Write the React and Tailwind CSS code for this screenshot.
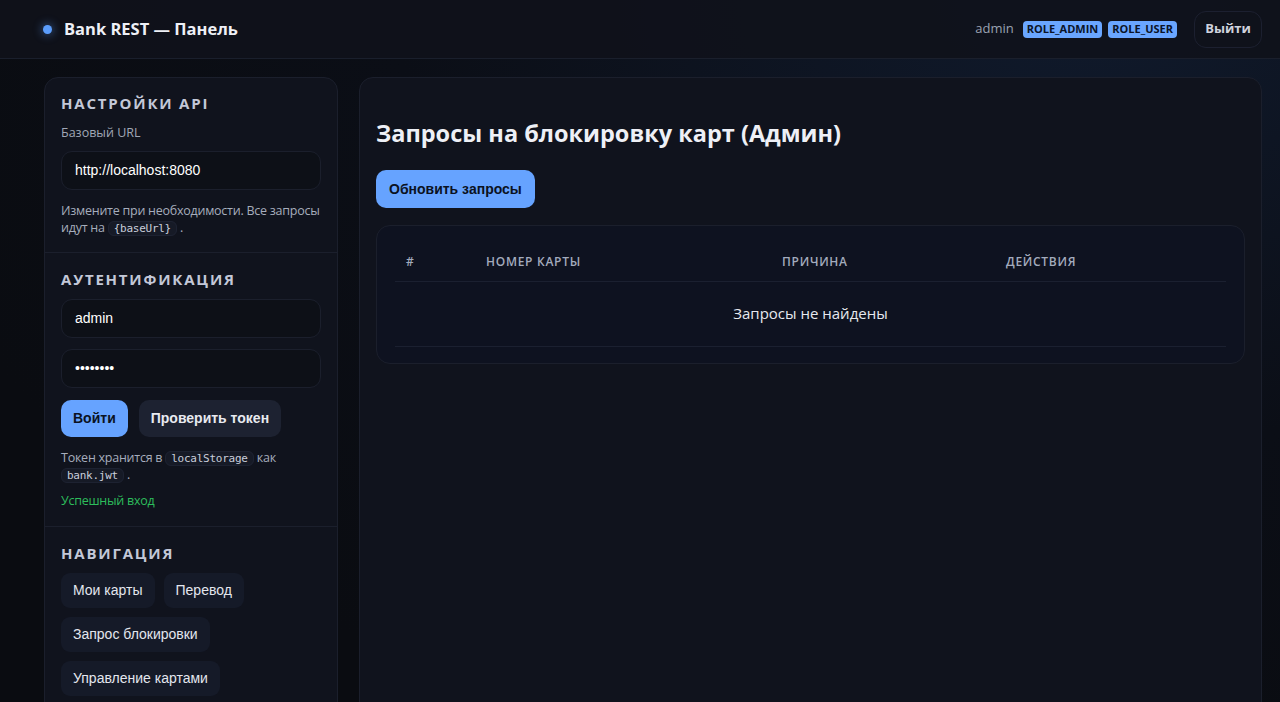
import React from 'react'

const sans = "font-['Open_Sans','Noto_Sans',sans-serif]"
const arial = "font-['Liberation_Sans',Arial,sans-serif]"
const mono = "font-['DejaVu_Sans_Mono','Liberation_Mono',monospace]"

function Code({ children }) {
  return (
    <code className={`${mono} text-[11px] leading-[14px] text-[#c9cedb] bg-[#161a26] border border-[#1d2231] rounded-md px-[5px] py-0`}>
      {children}
    </code>
  )
}

function Input({ value, type = 'text' }) {
  return (
    <input
      readOnly
      type={type}
      value={value}
      className={`${arial} w-full h-[39px] rounded-[11px] bg-[#0d1017] border border-[#1b1f2c] px-[13px] text-[14px] text-white outline-none`}
    />
  )
}

function SectionTitle({ children }) {
  return (
    <h2 className={`${sans} text-[15px] font-bold tracking-[0.12em] text-[#c3c8d8] leading-none`}>
      {children}
    </h2>
  )
}

export default function App() {
  const nav = [['Мои карты', 'Перевод'], ['Запрос блокировки'], ['Управление картами']]

  return (
    <div className="min-h-[702px] h-[702px] overflow-hidden bg-[#0a0c11] bg-[radial-gradient(ellipse_at_85%_0%,#101a2c_0%,#0b0e16_45%,#0a0c11_80%)]">
      {/* Header */}
      <header className="h-[59px] flex items-center justify-between pl-[43px] pr-[18px] bg-[#0f121b]/90 border-b border-[#1a1f2c]">
        <div className="flex items-center gap-[12px]">
          <span className="w-[9px] h-[9px] rounded-full bg-[#5b9dfc] shadow-[0_0_8px_2px_rgba(91,157,252,0.35)]" />
          <span className={`${sans} text-[16.5px] font-bold text-[#eef0f6]`}>Bank REST — Панель</span>
        </div>
        <div className="flex items-center">
          <span className={`${sans} text-[13px] text-[#9ba2b2] mr-[9px]`}>admin</span>
          <span className={`${sans} text-[11px] font-bold text-[#0b1428] bg-[#6aa6ff] rounded-[4px] px-[4px] h-[17px] flex items-center mr-[6px]`}>ROLE_ADMIN</span>
          <span className={`${sans} text-[11px] font-bold text-[#0b1428] bg-[#6aa6ff] rounded-[4px] px-[4px] h-[17px] flex items-center mr-[17px]`}>ROLE_USER</span>
          <button className={`${sans} h-[37px] w-[68px] rounded-[12px] border border-[#1c2030] bg-[#0f121b] text-[13px] font-bold text-[#cfd3de]`}>Выйти</button>
        </div>
      </header>

      <div className="flex gap-[21px] pl-[44px] pr-[18px] pt-[18px]">
        {/* Sidebar */}
        <aside className="w-[294px] shrink-0 h-[700px] rounded-[14px] bg-[#10131d] border border-[#1b1f2c]">
          <section className="px-[16px] pt-[18px] pb-[16px] border-b border-[#1b1f2c]">
            <SectionTitle>НАСТРОЙКИ API</SectionTitle>
            <div className={`${sans} text-[12.5px] text-[#a0a7b6] mt-[13px] mb-[8px]`}>Базовый URL</div>
            <Input value="http://localhost:8080" />
            <p className={`${sans} text-[12.5px] tracking-[-0.02em] leading-[17px] text-[#a6adbc] mt-[12px]`}>
              Измените при необходимости. Все запросы идут на <Code>{'{baseUrl}'}</Code> .
            </p>
          </section>

          <section className="px-[16px] pt-[19px] pb-[15px] border-b border-[#1b1f2c]">
            <SectionTitle>АУТЕНТИФИКАЦИЯ</SectionTitle>
            <div className="mt-[12px] flex flex-col gap-[11px]">
              <Input value="admin" />
              <Input value="password" type="password" />
            </div>
            <div className="flex gap-[11px] mt-[12px]">
              <button className={`${arial} h-[37px] px-[12px] rounded-[10px] bg-[#66a3ff] text-[14px] font-bold text-[#0b1222]`}>Войти</button>
              <button className={`${arial} h-[37px] px-[12px] rounded-[10px] bg-[#1d2231] text-[14px] font-bold text-[#e8eaf0]`}>Проверить токен</button>
            </div>
            <p className={`${sans} text-[12.5px] tracking-[-0.02em] leading-[17px] text-[#a6adbc] mt-[12px]`}>
              Токен хранится в <Code>localStorage</Code> как <Code>bank.jwt</Code> .
            </p>
            <p className={`${sans} text-[12.5px] tracking-[-0.02em] text-[#2dbd5c] mt-[9px]`}>Успешный вход</p>
          </section>

          <section className="px-[16px] pt-[19px]">
            <SectionTitle>НАВИГАЦИЯ</SectionTitle>
            <div className="mt-[12px] flex flex-col gap-[9px]">
              {nav.map((row, i) => (
                <div key={i} className="flex gap-[9px]">
                  {row.map((label) => (
                    <button key={label} className={`${arial} h-[35px] px-[12px] rounded-[9px] bg-[#151a28] text-[14px] text-[#e3e6ee]`}>
                      {label}
                    </button>
                  ))}
                </div>
              ))}
            </div>
          </section>
        </aside>

        {/* Main */}
        <main className="flex-1 h-[700px] rounded-[14px] bg-[#10131d] border border-[#1b1f2c] px-[16px] pt-[38px]">
          <h1 className={`${sans} text-[23.5px] font-bold text-[#eef0f6] leading-[34px]`}>Запросы на блокировку карт (Админ)</h1>
          <button className={`${arial} mt-[20px] h-[38px] px-[13px] rounded-[10px] bg-[#66a3ff] text-[14px] font-bold text-[#0b1222]`}>Обновить запросы</button>
          <div className="mt-[17px] rounded-[14px] bg-[#0e1220] border border-[#1b1f2c] px-[18px] pt-[18px] pb-[16px]">
            <table className="w-full border-collapse">
              <colgroup>
                <col className="w-[80px]" />
                <col className="w-[296px]" />
                <col className="w-[224px]" />
                <col />
              </colgroup>
              <thead>
                <tr className="border-b border-[#1b2030]">
                  {['#', 'НОМЕР КАРТЫ', 'ПРИЧИНА', 'ДЕЙСТВИЯ'].map((h) => (
                    <th key={h} className={`${sans} text-left font-semibold text-[12px] tracking-[0.06em] text-[#a3abbd] px-[11px] h-[37px] align-middle`}>{h}</th>
                  ))}
                </tr>
              </thead>
              <tbody>
                <tr className="border-b border-[#1b2030]">
                  <td colSpan={4} className={`${sans} text-center text-[15px] text-[#e6e8ee] h-[65px]`}>Запросы не найдены</td>
                </tr>
              </tbody>
            </table>
          </div>
        </main>
      </div>
    </div>
  )
}
